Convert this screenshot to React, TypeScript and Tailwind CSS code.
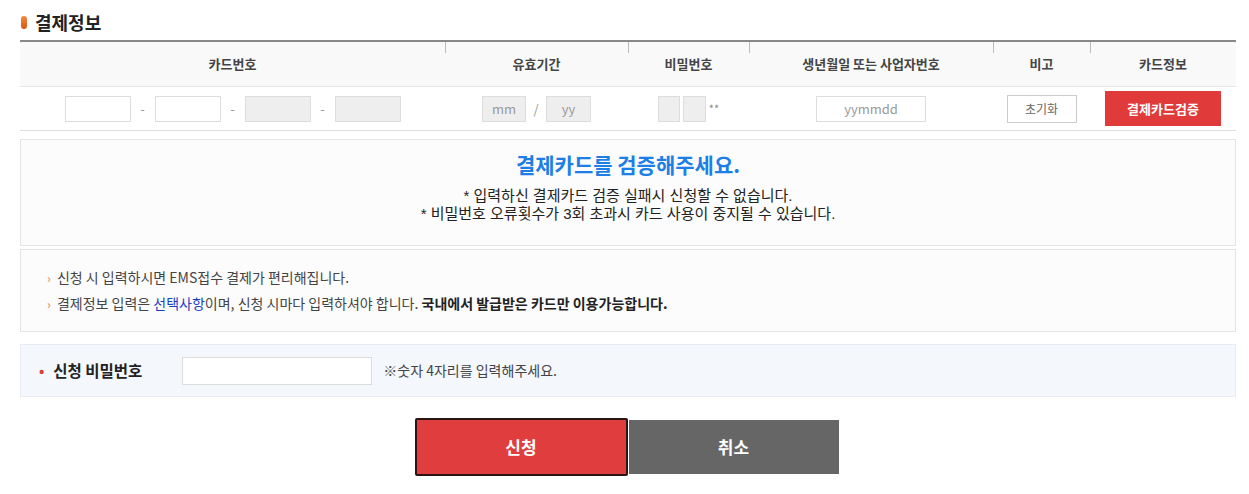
export default function App() {
  const cols = "grid-cols-[425px_183px_121px_244px_97px_146px]";
  const head =
    "relative flex h-[44px] items-center justify-center text-[13px] font-semibold text-[#444] before:absolute before:left-0 before:top-0 before:h-[11px] before:w-px before:bg-[#bbb]";

  return (
    <div className="min-h-[494px] w-[1249px] bg-white font-['Noto_Sans_CJK_KR','Noto_Sans',sans-serif] text-[#333]">
      <div className="mx-[20px] w-[1216px] pt-[10px]">
        <h2 className="flex h-[24px] items-center gap-[8px] text-[18px] font-bold text-[#222]">
          <span className="ml-px h-[13px] w-[6px] rounded-[3px] bg-gradient-to-b from-[#f08a3a] to-[#d9560f]" />
          결제정보
        </h2>

        <div className="mt-[6px] border-t-2 border-[#888]">
          <div className={`grid ${cols} border-b border-[#e6e6e6] bg-[#f9f9f9]`}>
            <div className="flex h-[44px] items-center justify-center text-[13px] font-semibold text-[#444]">카드번호</div>
            <div className={head}>유효기간</div>
            <div className={head}>비밀번호</div>
            <div className={head}>생년월일 또는 사업자번호</div>
            <div className={head}>비고</div>
            <div className={head}>카드정보</div>
          </div>
          <div className={`grid ${cols} h-[44px] items-center border-b border-[#ddd] text-[13px]`}>
            <div className="flex items-center justify-center text-[#999]">
              <span className="h-[26px] w-[66px] border border-[#ddd] bg-white" />
              <span className="w-[24px] text-center">-</span>
              <span className="h-[26px] w-[66px] border border-[#ddd] bg-white" />
              <span className="w-[24px] text-center">-</span>
              <span className="h-[26px] w-[66px] border border-[#ddd] bg-[#eee]" />
              <span className="w-[24px] text-center">-</span>
              <span className="h-[26px] w-[66px] border border-[#ddd] bg-[#eee]" />
            </div>
            <div className="flex items-center justify-center text-[#999]">
              <span className="flex h-[26px] w-[44px] items-center justify-center border border-[#ddd] bg-[#eee] text-[13px] text-[#999]">mm</span>
              <span className="w-[20px] text-center">/</span>
              <span className="flex h-[26px] w-[45px] items-center justify-center border border-[#ddd] bg-[#eee] text-[13px] text-[#999]">yy</span>
            </div>
            <div className="flex items-center justify-center gap-[3px] text-[#888]">
              <span className="h-[26px] w-[22px] border border-[#ddd] bg-[#eee]" />
              <span className="h-[26px] w-[23px] border border-[#ddd] bg-[#eee]" />
              <span className="text-[11px]">**</span>
            </div>
            <div className="flex items-center justify-center">
              <span className="flex h-[26px] w-[110px] items-center justify-center border border-[#ddd] bg-white text-[13px] text-[#999]">yymmdd</span>
            </div>
            <div className="flex items-center justify-center">
              <button className="h-[28px] w-[70px] border border-[#ccc] bg-white text-[12px] text-[#666]">초기화</button>
            </div>
            <div className="flex items-center justify-center">
              <button className="h-[35px] w-[116px] bg-[#e03a3a] text-[13px] font-bold text-white">결제카드검증</button>
            </div>
          </div>
        </div>

        <div className="mt-[8px] flex h-[107px] flex-col items-center border border-[#e4e4e4] bg-[#fcfcfc] pt-[9px]">
          <p className="text-[21px] font-bold text-[#1d7fe6]">결제카드를 검증해주세요.</p>
          <p className="mt-[6px] text-center font-['Liberation_Sans','Noto_Sans_CJK_KR',sans-serif] text-[15px] leading-[18px] text-[#222]">
            * 입력하신 결제카드 검증 실패시 신청할 수 없습니다.
            <br />* 비밀번호 오류횟수가 3회 초과시 카드 사용이 중지될 수 있습니다.
          </p>
        </div>

        <div className="mt-[3px] flex h-[83px] flex-col justify-center gap-[5px] border border-[#e4e4e4] bg-[#fcfcfc] pl-[26px] text-[14px] text-[#444]">
          <p className="flex items-center gap-[6px]">
            <span className="text-[12px] font-bold text-[#e8a060]">›</span>
            신청 시 입력하시면 EMS접수 결제가 편리해집니다.
          </p>
          <p className="flex items-center gap-[6px]">
            <span className="text-[12px] font-bold text-[#e8a060]">›</span>
            <span>
              결제정보 입력은 <span className="text-[#1a3fc4]">선택사항</span>이며, 신청 시마다 입력하셔야 합니다.{" "}
              <b className="font-bold text-[#222]">국내에서 발급받은 카드만 이용가능합니다.</b>
            </span>
          </p>
        </div>

        <div className="mt-[12px] flex h-[53px] items-center border border-[#e8ecf2] bg-[#f4f7fc] pl-[18px]">
          <span className="text-[14px] font-bold text-[#e03a3a]">•</span>
          <span className="ml-[9px] w-[129px] text-[15.5px] font-bold text-[#222]">신청 비밀번호</span>
          <span className="h-[28px] w-[190px] border border-[#ddd] bg-white" />
          <span className="ml-[11px] text-[14px] text-[#444]">※숫자 4자리를 입력해주세요.</span>
        </div>

        <div className="mt-[21px] flex justify-center pr-[3px]">
          <button className="h-[58px] w-[213px] rounded-[2px] border-2 border-[#2a1414] bg-[#e03e3e] text-[17px] font-bold text-white">신청</button>
          <button className="mt-[2px] ml-[1px] h-[54px] w-[210px] bg-[#666] text-[17px] font-bold text-white">취소</button>
        </div>
      </div>
    </div>
  );
}
